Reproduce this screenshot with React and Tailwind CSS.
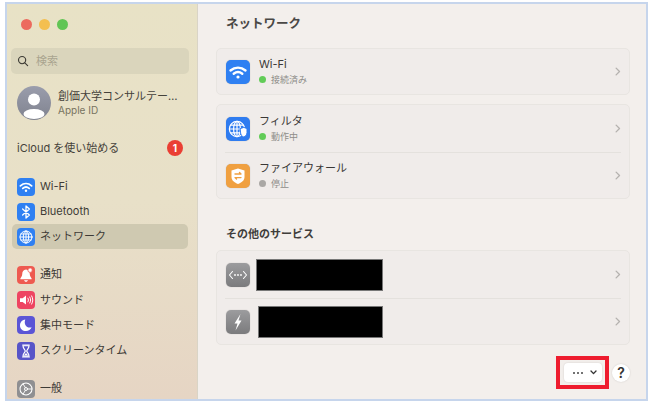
const FONT = "font-['Inter','Noto_Sans_CJK_JP',sans-serif]";

function Tile({ className = "", children }) {
  return (
    <div className={`w-[18px] h-[18px] rounded-[4px] flex items-center justify-center shrink-0 ${className}`}>
      <svg viewBox="0 0 24 24" className="w-full h-full" fill="none" stroke="white" strokeLinecap="round" strokeLinejoin="round">
        {children}
      </svg>
    </div>
  );
}

const WifiG = () => (
  <g strokeWidth="2.4">
    <path d="M4.5 10.5C9 6.6 15 6.6 19.5 10.5" />
    <path d="M7.7 13.8C10.4 11.6 13.6 11.6 16.3 13.8" />
    <circle cx="12" cy="17" r="1.6" fill="white" stroke="none" />
  </g>
);
const GlobeG = () => (
  <g strokeWidth="1.3">
    <circle cx="12" cy="12" r="8" />
    <ellipse cx="12" cy="12" rx="3.6" ry="8" />
    <path d="M4 12H20M5.2 8H18.8M5.2 16H18.8M12 4V20" />
  </g>
);
const Filter = () => (
  <g strokeWidth="1.2">
    <circle cx="11" cy="12" r="7.6" />
    <ellipse cx="11" cy="12" rx="3.4" ry="7.6" />
    <path d="M3.4 12H18.6M4.6 8.2H17.4M4.6 15.8H17.4M11 4.4V19.6" />
    <path d="M14.5 11.5L17.8 10.4L21 11.5V15.5C21 18 19.4 19.4 17.8 20C16.1 19.4 14.5 18 14.5 15.5Z" fill="white" stroke="#2f7cf0" strokeWidth="1" />
  </g>
);

function SideRow({ icon, label, active, height = "h-[25px]" }) {
  return (
    <div className={`${height} mx-px pl-[5px] flex items-center gap-[5px] rounded-[5px] text-[11px] text-[#3d3a36] ${active ? "bg-[#cfc9b1]" : ""}`}>
      {icon}
      <span>{label}</span>
    </div>
  );
}

function Chevron() {
  return (
    <svg viewBox="0 0 8 12" className="w-[6px] h-[9px] shrink-0" fill="none" stroke="#b5b2af" strokeWidth="1.8" strokeLinecap="round" strokeLinejoin="round">
      <path d="M1.5 1.5L6 6L1.5 10.5" />
    </svg>
  );
}

function MainTile({ className = "", children }) {
  return (
    <div className={`w-6 h-6 rounded-[5px] shrink-0 shadow-[0_0_1px_rgba(0,0,0,0.3)] ${className}`}>
      <svg viewBox="0 0 24 24" className="w-full h-full" fill="none" stroke="white" strokeLinecap="round" strokeLinejoin="round">
        {children}
      </svg>
    </div>
  );
}

function Row({ icon, title, status, dot, height = "h-[47px]", border }) {
  return (
    <div className={`${height} mx-2 pl-px flex items-center ${border ? "border-t border-[#e4e1dd]" : ""}`}>
      {icon}
      <div className="ml-[9px] flex-1 leading-none">
        <div className="text-[11px] text-[#3a3836] leading-[15px]">{title}</div>
        <div className="flex items-center gap-[5px] text-[9px] text-[#8e8c89] leading-[15px]">
          <span className={`w-[7px] h-[7px] rounded-full ${dot}`} />
          {status}
        </div>
      </div>
      <Chevron />
    </div>
  );
}

function RedactedRow({ icon, width, gap, height = "h-[47px]", border }) {
  return (
    <div className={`${height} mx-2 pl-px flex items-center ${border ? "border-t border-[#e4e1dd]" : ""}`}>
      {icon}
      <div className={`bg-black border border-[#777] h-[32px] ${width} ${gap}`} />
      <div className="flex-1" />
      <Chevron />
    </div>
  );
}

export default function App() {
  return (
    <div className={`w-[650px] h-[403px] bg-white pl-[5px] pr-[2px] pt-[2px] pb-[2px] overflow-hidden ${FONT}`}>
      <div className="h-full border-2 border-[#c6d5ec] flex overflow-hidden">
        <aside className="w-[191px] shrink-0 overflow-hidden bg-gradient-to-b from-[#e8e2c6] via-[#e8e0c8] to-[#e6d5c4] border-r border-[#d9d4c6] pl-[4px] pr-[8px]">
          <div className="flex gap-[7px] pl-[10px] pt-[15px]">
            <span className="w-[11px] h-[11px] rounded-full bg-[#ec6a5e]" />
            <span className="w-[11px] h-[11px] rounded-full bg-[#f4bf4f]" />
            <span className="w-[11px] h-[11px] rounded-full bg-[#61c554]" />
          </div>
          <div className="mt-[18px] h-[26px] rounded-[5px] bg-[#dad5bc] flex items-center pl-[6px] gap-[7px] text-[11px] text-[#a9a48f]">
            <svg viewBox="0 0 16 16" className="w-3 h-3" fill="none" stroke="#3c3a34" strokeWidth="1.5" strokeLinecap="round">
              <circle cx="6.8" cy="6.8" r="4.8" />
              <path d="M10.4 10.4L14.2 14.2" />
            </svg>
            <span>検索</span>
          </div>
          <div className="mt-3 flex items-center pl-[6px]">
            <div className="w-[34px] h-[34px] rounded-full bg-gradient-to-b from-[#9a9dac] to-[#80838f] overflow-hidden shrink-0">
              <svg viewBox="0 0 34 34" className="w-full h-full" fill="white">
                <circle cx="17" cy="13.5" r="6" />
                <ellipse cx="17" cy="28" rx="10.5" ry="5" />
              </svg>
            </div>
            <div className="ml-[7px] leading-none">
              <div className="whitespace-nowrap text-[11px] text-[#45423b] leading-[15px]">創価大学コンサルテー…</div>
              <div className="text-[10px] text-[#77735f] leading-[13px]">Apple ID</div>
            </div>
          </div>
          <div className="mt-5 h-4 flex items-center justify-between pl-[6px] pr-[6px] text-[11px] text-[#45423b]">
            <span>iCloud を使い始める</span>
            <span className="w-4 h-4 rounded-full bg-[#ea3f33] text-white text-[10px] font-bold flex items-center justify-center">1</span>
          </div>
          <div className="mt-[18px]">
            <SideRow label="Wi-Fi" icon={<Tile className="bg-[#2f80f2]"><WifiG /></Tile>} />
            <SideRow label="Bluetooth" icon={<Tile className="bg-[#2f80f2]"><path strokeWidth="1.7" d="M7.5 8L16.5 16L12 20V4L16.5 8L7.5 16" /></Tile>} />
            <SideRow active label="ネットワーク" icon={<Tile className="bg-[#2f80f2]"><GlobeG /></Tile>} />
          </div>
          <div className="mt-[13px]">
            <SideRow height="h-[25.3px]" label="通知" icon={<Tile className="bg-[#ee5a50]"><path fill="white" stroke="none" d="M12 4.5C8.5 4.5 7 7.5 7 10.5C7 13.5 5 15 4.5 16.5V17.5H19.5V16.5C19 15 17 13.5 17 10.5C17 7.5 15.5 4.5 12 4.5ZM9.5 19H14.5C14.2 20.3 13.2 21 12 21C10.8 21 9.8 20.3 9.5 19Z" /><circle cx="17.5" cy="5.5" r="3" fill="white" stroke="#ee5a50" strokeWidth="1" /></Tile>} />
            <SideRow height="h-[25.3px]" label="サウンド" icon={<Tile className="bg-[#ee4462]"><path fill="white" stroke="none" d="M4 9.5H7.5L12 6V18L7.5 14.5H4Z" /><path strokeWidth="1.3" d="M14.5 9.5C15.5 11 15.5 13 14.5 14.5M17 8C18.6 10.5 18.6 13.5 17 16M19.5 6.5C21.6 10 21.6 14 19.5 17.5" /></Tile>} />
            <SideRow height="h-[25.3px]" label="集中モード" icon={<Tile className="bg-[#5b55d6]"><path fill="white" stroke="none" d="M11 4.5C6.5 5 4 8.5 4 12.5C4 17 7.5 20 12 20C15.5 20 18.3 18 19.5 15C13.5 17 8.5 11.5 11 4.5Z" /></Tile>} />
            <SideRow height="h-[25.3px]" label="スクリーンタイム" icon={<Tile className="bg-[#5754c8]"><path fill="white" stroke="white" strokeWidth="1.5" d="M7.5 4H16.5M7.5 20H16.5" /><path fill="none" stroke="white" strokeWidth="1.6" d="M8 5C8 9 11 10 11 12C11 14 8 15 8 19H16C16 15 13 14 13 12C13 10 16 9 16 5Z" /><path fill="white" stroke="none" d="M9 18L12 14.5L15 18Z" /></Tile>} />
          </div>
          <div className="mt-[13px]">
            <SideRow label="一般" icon={<Tile className="bg-[#8f8f92]"><circle cx="12" cy="12" r="8" strokeWidth="1.4" /><circle cx="12" cy="12" r="2" strokeWidth="1.3" /><path strokeWidth="1.2" d="M14 12H20M11 10L8 5M11 14L8 19" /></Tile>} />
          </div>
        </aside>
        <main className="flex-1 bg-[#f3efec] pl-[18px] pr-[16px] flex flex-col">
          <h1 className="mt-[11px] ml-2.5 text-[12.5px] font-semibold text-[#4a4846] leading-[18px]">ネットワーク</h1>
          <section className="mt-[15px] rounded-[5px] bg-[#f0ecea] border border-[#e8e5e1]">
            <Row height="h-[45px]" title="Wi-Fi" status="接続済み" dot="bg-[#62cc58]" icon={<MainTile className="bg-[#2f80f2]"><WifiG /></MainTile>} />
          </section>
          <section className="mt-[9px] rounded-[5px] bg-[#f0ecea] border border-[#e8e5e1]">
            <Row title="フィルタ" status="動作中" dot="bg-[#62cc58]" icon={<MainTile className="bg-[#2f7cf0]"><Filter /></MainTile>} />
            <Row border height="h-[46px]" title="ファイアウォール" status="停止" dot="bg-[#aaa8a5]" icon={
              <MainTile className="bg-[#f0a040]">
                <path fill="white" stroke="none" d="M12 4.5L18.5 6.5V13C18.5 16.5 15.5 18.6 12 20C8.5 18.6 5.5 16.5 5.5 13V6.5Z" />
                <path stroke="#f0a040" strokeWidth="1.4" d="M9 10H15L13.5 8.6M15 13.6H9L10.5 15" />
              </MainTile>
            } />
          </section>
          <h2 className="mt-[27px] ml-2.5 text-[11px] font-semibold text-[#3f3d3b] leading-[16px]">その他のサービス</h2>
          <section className="mt-2 rounded-[5px] bg-[#f0ecea] border border-[#e8e5e1]">
            <RedactedRow width="w-[127px]" gap="ml-[6px]" icon={
              <MainTile className="bg-gradient-to-b from-[#9c9c9e] to-[#7b7b7d]">
                <path strokeWidth="1.1" d="M6.5 8.5L3.5 12L6.5 15.5M17.5 8.5L20.5 12L17.5 15.5" />
                <circle cx="9" cy="12" r="0.9" fill="white" stroke="none" />
                <circle cx="12" cy="12" r="0.9" fill="white" stroke="none" />
                <circle cx="15" cy="12" r="0.9" fill="white" stroke="none" />
              </MainTile>
            } />
            <RedactedRow border height="h-[46px]" width="w-[125px]" gap="ml-2" icon={
              <MainTile className="bg-gradient-to-b from-[#9c9c9e] to-[#7b7b7d]">
                <path fill="white" stroke="none" d="M14.5 4L8.5 13.5H11.5L9.5 20.5L15.5 10.5H12.5Z" />
              </MainTile>
            } />
          </section>
          <div className="mt-[11px] flex items-center justify-end gap-[3px]">
            <div className="border-4 border-[#ee1c2e] w-[53px] h-[33px] flex items-center justify-center">
              <div className="w-[38px] h-[19px] pl-[5px] rounded-[4px] bg-white shadow-[0_0_2px_rgba(0,0,0,0.15)] flex items-center justify-center gap-[7px] shrink-0">
                <span className="flex gap-[2px]">
                  <i className="w-[2px] h-[2px] rounded-full bg-[#444]" />
                  <i className="w-[2px] h-[2px] rounded-full bg-[#444]" />
                  <i className="w-[2px] h-[2px] rounded-full bg-[#444]" />
                </span>
                <svg viewBox="0 0 8 6" className="w-[7px] h-[5px]" fill="none" stroke="#333" strokeWidth="1.6" strokeLinecap="round" strokeLinejoin="round">
                  <path d="M1 1.2L4 4.4L7 1.2" />
                </svg>
              </div>
            </div>
            <div className="w-[18px] h-[18px] rounded-full bg-white shadow-[0_0_2px_rgba(0,0,0,0.15)] flex items-center justify-center text-[14px] font-semibold text-[#333]">?</div>
          </div>
        </main>
      </div>
    </div>
  );
}
